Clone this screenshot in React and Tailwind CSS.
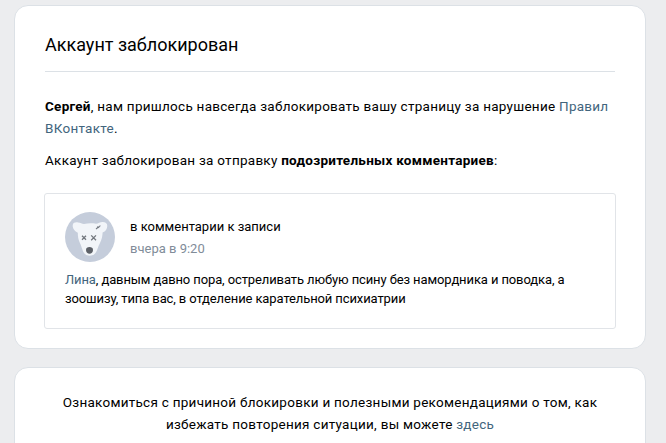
import React from 'react';

const DogAvatar = () => (
  <svg viewBox="0 0 50 50" fill="none" className="w-[50px] h-[50px] shrink-0">
    <circle cx="25" cy="25" r="25" fill="#c5cddb" />
    <path
      d="M7.8 12.8C8.2 10.6 10.4 10.1 13 10.4C15.6 10.7 17 11.9 19 11.9C23 11.2 27 11.1 31 11.7C33.2 11.4 35 9.9 37.6 9.9C40.4 10 42.4 11.2 42.3 13.8C42.2 17 40.6 19.8 37.6 20.6C37.5 24 36.8 27.6 35 31C33 34.6 32.6 37.6 31 40.2C29.6 42.6 27.4 43.7 24.6 43.7C21.8 43.7 19.6 42.4 18.2 39.8C17 37 16.4 34 14.8 30.8C13.2 27.4 12.8 24 12.8 20.8C9.4 19.1 7.2 15.8 7.8 12.8Z"
      fill="#f2f5f9"
    />
    <path d="M17 23.8L21 27.8M21 23.8L17 27.8M26.2 23.4L31 28.2M31 23.4L26.2 28.2" stroke="#72777e" strokeWidth="1.3" />
    <path d="M31 17L35.4 13.6M32 14.7L34.2 15.8" stroke="#777c84" strokeWidth="1.1" />
    <path d="M21 37.9C21 35.9 22.4 35 24.5 35C26.6 35 28 35.9 28 37.9C28 40.2 26.4 41.7 24.5 41.7C22.6 41.7 21 40.2 21 37.9Z" fill="#5d6168" />
  </svg>
);

const Link = ({ children }) => (
  <a href="#" className="text-[#42657d]">{children}</a>
);

const App = () => {
  return (
    <div className="h-[443px] overflow-hidden bg-[#ecedef] pl-[14px] pr-5 pt-[5px] font-['Roboto',sans-serif] text-black">
      <div className="h-[344px] rounded-[14px] border border-[#dce1e6] bg-white px-[29px]">
        <h1 className="mx-px h-[66px] border-b border-[#dce1e6] pt-[27px] text-[18px] leading-6">Аккаунт заблокирован</h1>

        <div className="ml-px pt-[23px] text-[13.5px] leading-[22px] tracking-[0.265px]">
          <p className="whitespace-nowrap">
            <b>Сергей</b>, нам пришлось навсегда заблокировать вашу страницу за нарушение <Link>Правил<br />ВКонтакте</Link>.
          </p>
          <p className="mt-[10px] whitespace-nowrap">
            Аккаунт заблокирован за отправку <b>подозрительных комментариев</b>:
          </p>
        </div>

        <div className="mt-[22px] h-[136px] rounded-[3px] border border-[#e1e4e8] px-5 pt-[18px]">
          <div className="flex gap-[15px]">
            <DogAvatar />
            <div className="pt-1 text-[13px] leading-[22px]">
              <p>в комментарии к записи</p>
              <p className="text-[#818c99]">вчера в 9:20</p>
            </div>
          </div>
          <p className="mt-2 whitespace-nowrap text-[13px] leading-[19px] tracking-[-0.11px]">
            <Link>Лина</Link>, давным давно пора, остреливать любую псину без намордника и поводка, а<br />
            зоошизу, типа вас, в отделение карательной психиатрии
          </p>
        </div>
      </div>

      <div className="mt-[18px] h-[120px] rounded-[14px] border border-[#dce1e6] bg-white pt-[23px] text-center text-[13.5px] leading-[22px] tracking-[0.265px]">
        Ознакомиться с причиной блокировки и полезными рекомендациями о том, как<br />
        избежать повторения ситуации, вы можете <Link>здесь</Link>
      </div>
    </div>
  );
};

export default App;
